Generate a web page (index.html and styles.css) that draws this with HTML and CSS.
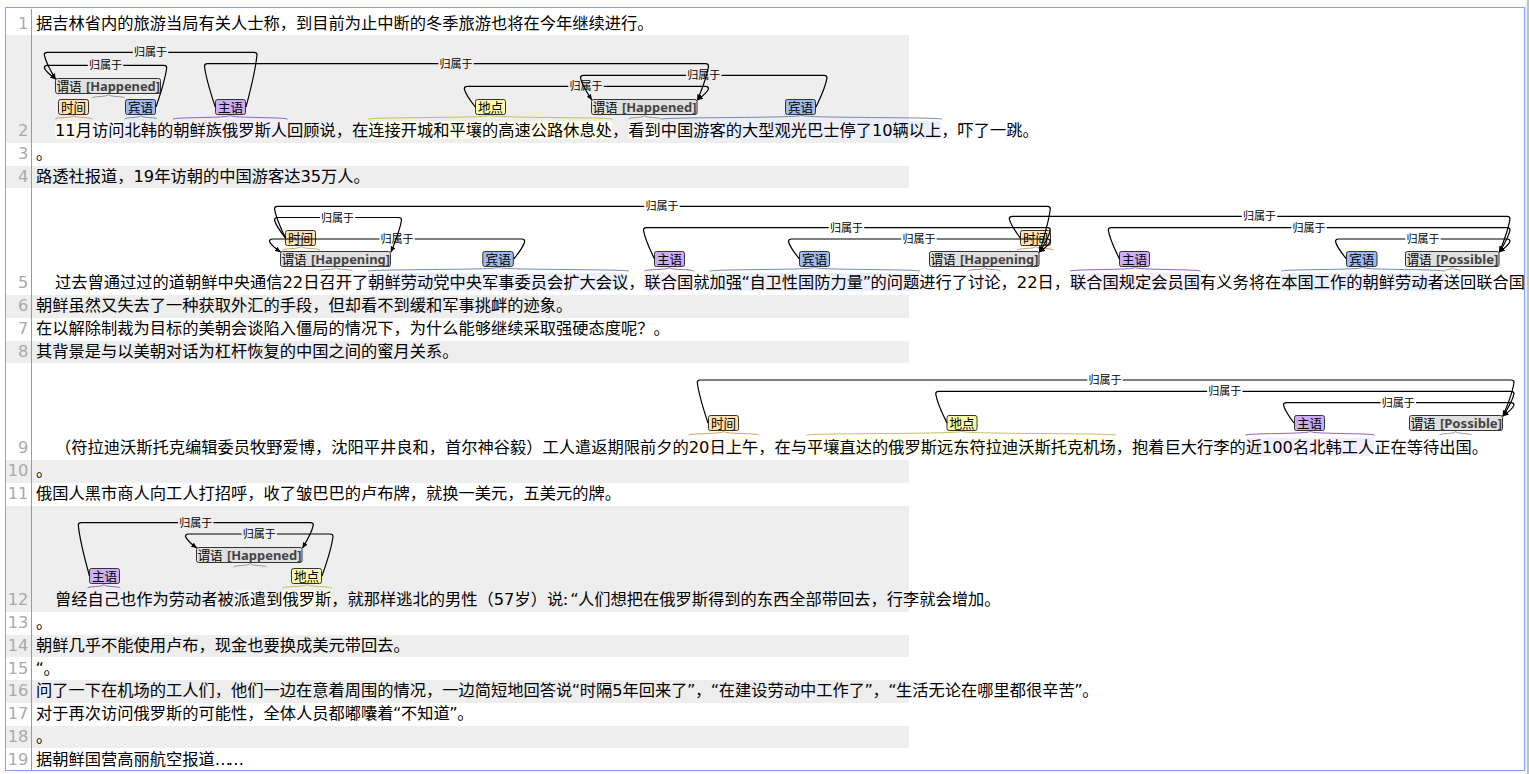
FILE: index.html
```html
<!DOCTYPE html>
<html lang="zh-CN">
<head>
<meta charset="utf-8">
<title>brat</title>
<link rel="stylesheet" href="styles.css">
</head>
<body>
<main class="doc">
  <div class="row h27"><span class="num">1</span><p class="text">据吉林省内的旅游当局有关人士称，到目前为止中断的冬季旅游也将在今年继续进行。</p></div>
  <div class="row shade h108"><span class="num">2</span><p class="text indent"><span class="mark time">11月</span><span class="mark pred">访问</span><span class="mark obj">北韩</span>的<span class="mark subj">朝鲜族俄罗斯人</span>回顾说，在<span class="mark place">连接开城和平壤的高速公路休息处</span>，<span class="mark pred">看到</span><span class="mark obj">中国游客的大型观光巴士停了10辆以上</span>，吓了一跳。</p></div>
  <div class="row h23"><span class="num">3</span><p class="text">。</p></div>
  <div class="row shade h22"><span class="num">4</span><p class="text">路透社报道，19年访朝的中国游客达35万人。</p></div>
  <div class="row h107"><span class="num">5</span><p class="text indent">过去曾通过过的道朝鲜中央通信<span class="mark time">22日</span><span class="mark pred">召开</span>了<span class="mark obj">朝鲜劳动党中央军事委员会扩大会议</span>，<span class="mark subj">联合国</span>就<span class="mark obj">加强<span class="q">“</span>自卫性国防力量<span class="q">”</span>的问题</span>进行了<span class="mark pred">讨论</span>，<span class="mark time">22日</span>，<span class="mark subj">联合国规定会员国</span>有义务将在<span class="mark obj">本国工作的朝鲜劳动者</span><span class="mark pred">送</span>回联合国</p></div>
  <div class="row shade h23"><span class="num">6</span><p class="text">朝鲜虽然又失去了一种获取外汇的手段，但却看不到缓和军事挑衅的迹象。</p></div>
  <div class="row h23"><span class="num">7</span><p class="text">在以解除制裁为目标的美朝会谈陷入僵局的情况下，为什么能够继续采取强硬态度呢？。</p></div>
  <div class="row shade h22"><span class="num">8</span><p class="text">其背景是与以美朝对话为杠杆恢复的中国之间的蜜月关系。</p></div>
  <div class="row h97"><span class="num">9</span><p class="text indent">（符拉迪沃斯托克编辑委员牧野爱博，沈阳平井良和，首尔神谷毅）工人遣返期限前夕的<span class="mark time">20日上午</span>，在与<span class="mark place">平壤直达的俄罗斯远东符拉迪沃斯托克机场</span>，抱着巨大行李的<span class="mark subj">近100名北韩工人</span>正在等待<span class="mark pred">出国</span>。</p></div>
  <div class="row shade h23"><span class="num">10</span><p class="text">。</p></div>
  <div class="row h23"><span class="num">11</span><p class="text">俄国人黑市商人向工人打招呼，收了皱巴巴的卢布牌，就换一美元，五美元的牌。</p></div>
  <div class="row shade h106"><span class="num">12</span><p class="text indent">曾经<span class="mark subj">自己</span>也作为劳动者被<span class="mark pred">派遣</span>到<span class="mark place">俄罗斯</span>，就那样逃北的男性（57岁）说<span class="q">:</span><span class="q">“</span>人们想把在俄罗斯得到的东西全部带回去，行李就会增加。</p></div>
  <div class="row h23"><span class="num">13</span><p class="text">。</p></div>
  <div class="row shade h22"><span class="num">14</span><p class="text">朝鲜几乎不能使用卢布，现金也要换成美元带回去。</p></div>
  <div class="row h23 low"><span class="num">15</span><p class="text"><span class="q">“</span>。</p></div>
  <div class="row shade h23"><span class="num">16</span><p class="text">问了一下在机场的工人们，他们一边在意着周围的情况，一边简短地回答说<span class="q">“</span>时隔5年回来了<span class="q">”</span>，<span class="q">“</span>在建设劳动中工作了<span class="q">”</span>，<span class="q">“</span>生活无论在哪里都很辛苦<span class="q">”</span>。</p></div>
  <div class="row h23"><span class="num">17</span><p class="text">对于再次访问俄罗斯的可能性，全体人员都嘟囔着<span class="q">“</span>不知道<span class="q">”</span>。</p></div>
  <div class="row shade h22"><span class="num">18</span><p class="text">。</p></div>
  <div class="row h23 low"><span class="num">19</span><p class="text">据朝鲜国营高丽航空报道<span class="dots">……</span></p></div>
  <svg class="layer" width="1529" height="774" viewBox="0 0 1529 774">
    <defs>
      <marker id="arrow" viewBox="0 0 6 5" markerWidth="6" markerHeight="5" refX="5.5" refY="2.5" orient="auto" markerUnits="userSpaceOnUse"><path d="M0,0 L6,2.5 L0,5 Z"/></marker>
    </defs>
  </svg>
</main>
<div class="scroll"></div>
<script src="annotations.js"></script>
</body>
</html>
```
FILE: styles.css
```css
body {
  margin: 0;
  height: 774px;
  overflow: hidden;
  display: flex;
  background: #fff;
  font-family: "DejaVu Sans", "Noto Sans CJK SC", sans-serif;
  font-size: 16.25px;
  text-spacing-trim: space-all;
}
.doc {
  box-sizing: border-box;
  width: 1520px;
  height: 764px;
  margin: 7px 0 0 5px;
  border: 1px solid #7fa2ff;
  background: linear-gradient(#999, #999) 25px 1px / 1px 100% no-repeat;
}
.row {
  box-sizing: border-box;
  display: flex;
  align-items: flex-end;
  width: 903px;
  padding-bottom: 1px;
  white-space: nowrap;
  line-height: 22px;
}
.shade { background: linear-gradient(90deg, #eee 25px, #999 25px, #999 26px, #eee 26px); }
.h22 { height: 22px; padding-bottom: 0; }
.h23 { height: 23px; }
.h27 { height: 27px; padding-bottom: 0; }
.h97 { height: 97px; }
.h106 { height: 106px; }
.h107 { height: 107px; }
.h108 { height: 108px; }
.low { padding-bottom: 0; }
.num {
  flex: none;
  width: 22.4px;
  margin-right: 7.6px;
  color: #aaa;
  display: flex;
  justify-content: flex-end;
}
.text { margin: 0; color: #000; }
.indent { padding-left: 19px; }
.q { display: inline-block; width: 7.46px; text-indent: -0.5px; }
.dots { letter-spacing: -3.3px; }
.mark { position: relative; z-index: 0; }
.mark::before {
  content: "";
  position: absolute;
  inset: 0 0 1px;
  z-index: -1;
  border-radius: 3px;
}
.time::before { background: #fff9f0; }
.pred::before { background: #fbfbfb; }
.obj::before { background: #ecf0fc; }
.subj::before { background: #f4eefd; }
.place::before { background: #ffffea; }

.layer {
  position: absolute;
  left: 0;
  top: 0;
  pointer-events: none;
}
.box { stroke: #333; stroke-width: 1; }
.box-time { fill: #ffe2b0; }
.box-pred { fill: #e0e0e0; }
.box-obj { fill: #9fbaf2; }
.box-subj { fill: #ccadf6; }
.box-place { fill: #fffda8; }
.curly { fill: none; stroke-width: 1; }
.curly-time { stroke: #cca55c; }
.curly-pred { stroke: #999; }
.curly-obj { stroke: #6f88bd; }
.curly-subj { stroke: #8e62c4; }
.curly-place { stroke: #c4c25a; }
.tag { font: 12.6px "Noto Sans CJK SC", sans-serif; fill: #000; }
.attr { font: bold 13px "Noto Sans", "Open Sans", sans-serif; fill: #444; }
.arc { fill: none; stroke: #000; stroke-width: 1.2; }
.role { font: 11px "Noto Sans CJK SC", sans-serif; fill: #000; text-anchor: middle; }

.scroll {
  width: 2px;
  height: 774px;
  border-left: 2px solid #f1f1f1;
  background: #c1c1c1;
}
```
FILE: annotations.js
```js
const NS = "http://www.w3.org/2000/svg";
const layer = document.querySelector(".layer");

function add(name, attrs, text) {
  const el = document.createElementNS(NS, name);
  for (const key in attrs) el.setAttribute(key, attrs[key]);
  if (text) el.textContent = text;
  layer.appendChild(el);
}

const NAMES = { time: "时间", pred: "谓语", obj: "宾语", subj: "主语", place: "地点" };

// type, box left, box top, box width, brace from, brace to, attribute
const spans = [
  ["pred", 55.5, 78.5, 105, 91.7, 125, "[Happened]"],
  ["time", 58.5, 99.5, 30, 55, 92.5],
  ["obj", 125.5, 99.5, 30, 124.5, 157.5],
  ["subj", 215.5, 99.5, 30, 173, 287.5],
  ["place", 475.5, 99.5, 30, 368, 612.5],
  ["pred", 591.5, 99.5, 105.5, 628.3, 661, "[Happened]"],
  ["obj", 785.5, 99.5, 30, 661, 942],
  ["time", 285.5, 230.5, 30, 282.5, 320],
  ["pred", 280.5, 251.5, 110, 319.5, 352.5, "[Happening]"],
  ["obj", 482.8, 251.5, 30.5, 368, 629],
  ["subj", 654.5, 251.5, 30, 644.3, 693.7],
  ["obj", 799.5, 251.5, 30, 709.5, 920],
  ["pred", 929.5, 251.5, 109.5, 968, 1001, "[Happening]"],
  ["time", 1020.5, 230.5, 30, 1017, 1054],
  ["subj", 1119.5, 251.5, 30, 1070, 1200.5],
  ["obj", 1346.5, 251.5, 30.5, 1281.3, 1444],
  ["pred", 1405.5, 251.5, 93.5, 1444, 1461, "[Possible]"],
  ["time", 708.5, 415.5, 30, 688.5, 759],
  ["place", 947, 415.5, 30, 806.3, 1116],
  ["subj", 1294.5, 415.5, 30, 1245.3, 1375],
  ["pred", 1409.5, 415.5, 93, 1439.3, 1472, "[Possible]"],
  ["pred", 196.5, 547.5, 105.5, 233.3, 266.7, "[Happened]"],
  ["subj", 89.5, 568.5, 30, 87.3, 120.3],
  ["place", 291.5, 568.5, 30, 282.3, 331.7]
];

for (const [type, x, y, w, from, to, attr] of spans) {
  const mid = (from + to) / 2;
  const top = y + 15.8;
  add("path", {
    class: `curly curly-${type}`,
    d: `M${from},${top + 4} C${from},${top + 1.6} ${mid},${top + 3} ${mid},${top} C${mid},${top + 3} ${to},${top + 1.6} ${to},${top + 4}`
  });
  add("rect", { class: `box box-${type}`, x, y, width: w, height: 15, rx: 2 });
  add("text", { class: "tag", x: attr ? x + 1 : x + w / 2 - 12.5, y: y + 12, textLength: 25.2 }, NAMES[type]);
  if (attr) add("text", { class: "attr", x: x + 30.4, y: y + 12.2, textLength: w - 30.9, lengthAdjust: "spacingAndGlyphs" }, attr);
}

// height, left elbow, right elbow, label centre, left end, right end, side of the arrowhead
const arcs = [
  [52.3, 44.3, 257, 150.5, [55.5, 79], [246, 107], "left"],
  [65.3, 44.3, 166.7, 105.5, [55.5, 79], [156, 107], "left"],
  [63.7, 204.5, 708.5, 456, [215.3, 107], [697.5, 100], "right"],
  [75.3, 580.5, 827, 703.8, [591.8, 99.8], [816, 107], "left"],
  [86.4, 464.3, 708.5, 586, [475.3, 107], [697.5, 100], "right"],
  [206.3, 274.5, 1050.3, 662, [285.5, 238], [1039.5, 252], "right"],
  [217.5, 274.5, 401.5, 337.5, [285.5, 238], [391, 252], "right"],
  [239, 269.5, 524.7, 397, [280.5, 252], [513.7, 259], "left"],
  [227.6, 643.5, 1050.3, 846.5, [654.5, 259], [1039.5, 252], "right"],
  [239, 788.5, 1050.3, 919, [799.5, 259], [1039.5, 252], "right"],
  [216.4, 1009.3, 1510, 1259.5, [1020.3, 238], [1499.5, 252], "right"],
  [227.6, 1108.3, 1510, 1309, [1119.5, 259], [1499.5, 252], "right"],
  [239, 1335.5, 1510, 1423, [1346.5, 259], [1499.5, 252], "right"],
  [380, 697.3, 1514, 1105, [708, 423], [1503, 416], "right"],
  [391.3, 935.7, 1514, 1224.8, [947, 423], [1503, 416], "right"],
  [402.6, 1283.5, 1514, 1398.3, [1294, 423], [1503, 416], "right"],
  [522.6, 78.3, 313.3, 195.7, [89.5, 576], [302.5, 548], "right"],
  [534, 185.5, 333, 259.3, [196.7, 548], [322, 576], "left"]
];

// Half of an arc: label gap -> elbow -> end point
function half(y, gap, elbow, end, arrow) {
  const dir = gap < elbow ? 1 : -1;
  const drop = (end[1] - y) * 0.3;
  const attrs = {
    class: "arc",
    d: `M${gap},${y} H${elbow - dir * 3} Q${elbow},${y} ${elbow},${y + 2.5} Q${elbow - dir * 1.5},${y + 2.5 + drop} ${end[0]},${end[1]}`
  };
  if (arrow) attrs["marker-end"] = "url(#arrow)";
  add("path", attrs);
}

for (const [y, left, right, label, a, b, side] of arcs) {
  half(y, label - 17.7, left, a, side === "left");
  half(y, label + 17.7, right, b, side === "right");
  add("text", { class: "role", x: label, y: y + 4 }, "归属于");
}
```
